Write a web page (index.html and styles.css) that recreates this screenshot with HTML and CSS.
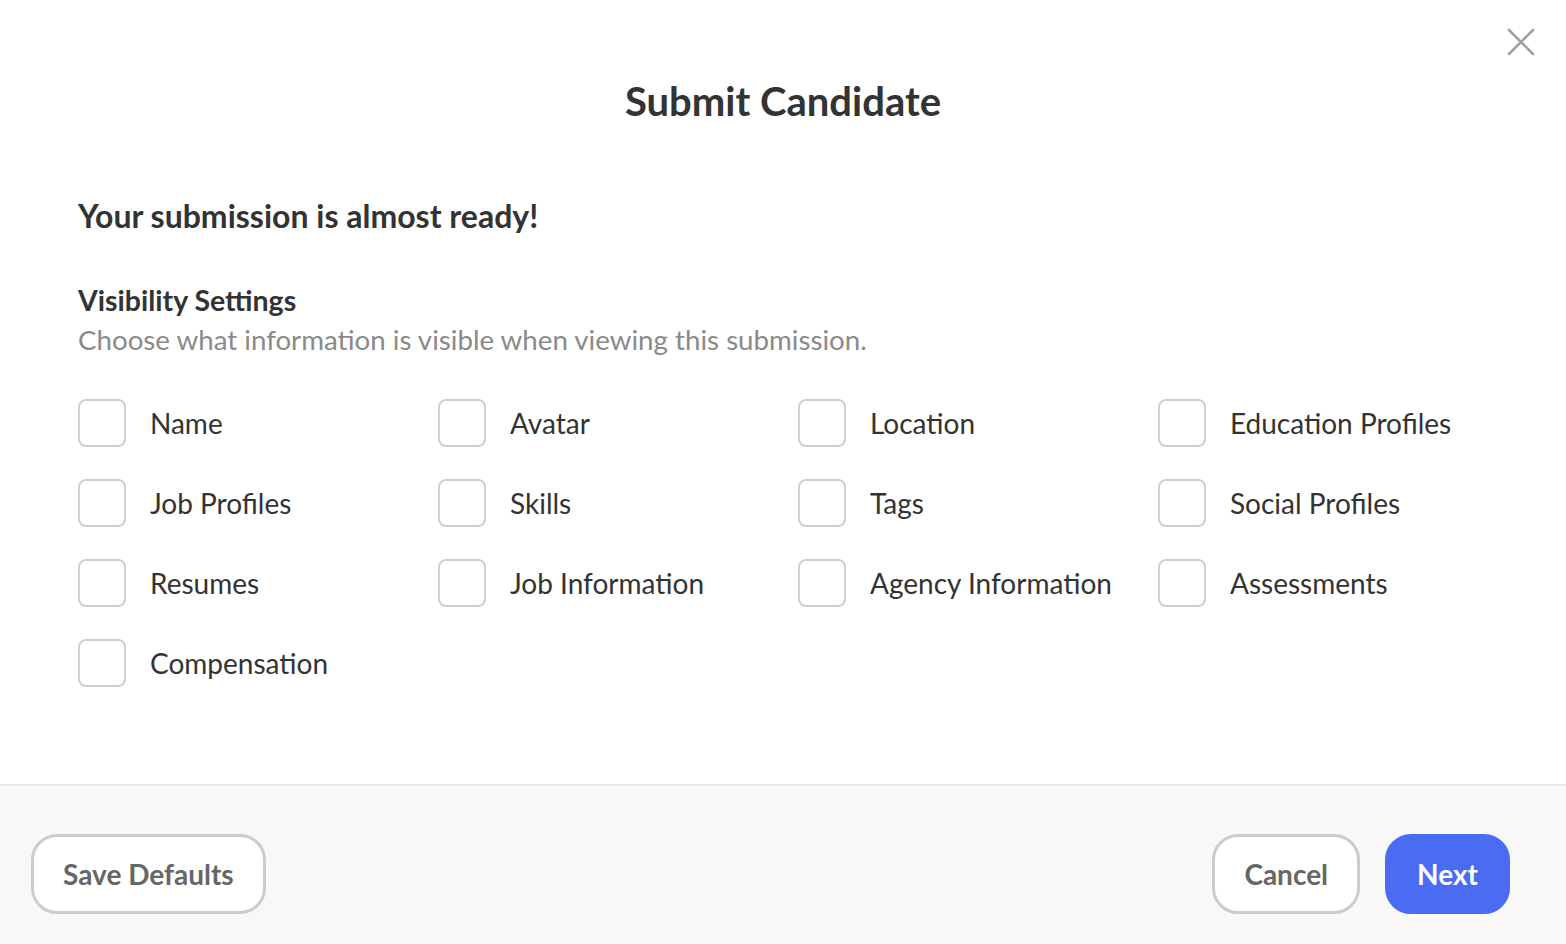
FILE: index.html
```html
<!DOCTYPE html>
<html lang="en">
<head>
    <meta charset="UTF-8" />
    <title>Submit Candidate</title>
    <link rel="stylesheet" href="styles.css">
</head>
<body>

    <div class="modal">
        <!-- close button -->
        <button class="close-btn" aria-label="Close">
            <svg width="28" height="28" viewBox="0 0 28 28">
                <path d="M2 2 L26 26 M26 2 L2 26" stroke="#a0a0a0" stroke-width="2.6" stroke-linecap="round" fill="none"/>
            </svg>
        </button>

        <div class="modal-body">
            <h1 class="modal-title">Submit Candidate</h1>

            <h2 class="ready">Your submission is almost ready!</h2>

            <h3 class="section-title">Visibility Settings</h3>
            <p class="section-sub">Choose what information is visible when viewing this submission.</p>

            <div class="options">
                <label class="option"><span class="box"></span>Name</label>
                <label class="option"><span class="box"></span>Avatar</label>
                <label class="option"><span class="box"></span>Location</label>
                <label class="option"><span class="box"></span>Education Profiles</label>
                <label class="option"><span class="box"></span>Job Profiles</label>
                <label class="option"><span class="box"></span>Skills</label>
                <label class="option"><span class="box"></span>Tags</label>
                <label class="option"><span class="box"></span>Social Profiles</label>
                <label class="option"><span class="box"></span>Resumes</label>
                <label class="option"><span class="box"></span>Job Information</label>
                <label class="option"><span class="box"></span>Agency Information</label>
                <label class="option"><span class="box"></span>Assessments</label>
                <label class="option"><span class="box"></span>Compensation</label>
            </div>
        </div>

        <!-- footer -->
        <div class="modal-footer">
            <button class="btn btn-outline">Save Defaults</button>
            <div class="footer-right">
                <button class="btn btn-outline">Cancel</button>
                <button class="btn btn-primary">Next</button>
            </div>
        </div>
    </div>

</body>
</html>
```
FILE: styles.css
```css
/* --- Page --- */
body {
    margin: 0;
    padding: 0;
    background: #ffffff;
    font-family: Lato, "Open Sans", Arial, sans-serif;
    color: #333333;
}

.modal {
    position: relative;
    height: 944px;
    display: flex;
    flex-direction: column;
}

.close-btn {
    position: absolute;
    top: 28px;
    right: 31px;
    background: none;
    border: none;
    padding: 0;
    cursor: pointer;
}

/* --- Body --- */
.modal-body {
    flex: 1;
    padding: 0 78px;
}

.modal-title {
    margin: 76px 0 0 0;
    text-align: center;
    font-size: 40px;
    line-height: 50px;
    font-weight: 700;
    color: #333333;
}

.ready {
    margin: 70px 0 0 0;
    font-size: 32px;
    line-height: 40px;
    font-weight: 700;
    color: #333333;
}

.section-title {
    margin: 46px 0 0 0;
    font-size: 28.5px;
    line-height: 36px;
    font-weight: 700;
    color: #333333;
}

.section-sub {
    margin: 4px 0 0 0;
    font-size: 27.7px;
    line-height: 36px;
    color: #8a8a8a;
}

.options {
    margin-top: 41px;
    display: grid;
    grid-template-columns: repeat(4, 360px);
    row-gap: 32px;
}

.option {
    display: flex;
    align-items: center;
    gap: 24px;
    height: 48px;
    font-size: 28px;
    color: #333333;
    cursor: pointer;
}

.box {
    width: 44px;
    height: 44px;
    border: 2px solid #cfcfcf;
    border-radius: 8px;
    background: #ffffff;
    flex-shrink: 0;
}

/* --- Footer --- */
.modal-footer {
    height: 160px;
    box-sizing: border-box;
    border-top: 2px solid #e6e6e6;
    background: #f8f8f8;
    display: flex;
    justify-content: space-between;
    align-items: flex-start;
    padding: 48px 56px 0 31px;
}

.footer-right {
    display: flex;
    gap: 25px;
}

.btn {
    height: 80px;
    padding: 0 29px;
    border-radius: 26px;
    font-family: Lato, "Open Sans", Arial, sans-serif;
    font-size: 28px;
    font-weight: 700;
    cursor: pointer;
}

.btn-outline {
    background: #ffffff;
    border: 3px solid #cccccc;
    color: #666666;
}

.btn-primary {
    background: #4a6cf3;
    border: 3px solid #4a6cf3;
    color: #ffffff;
}
```
